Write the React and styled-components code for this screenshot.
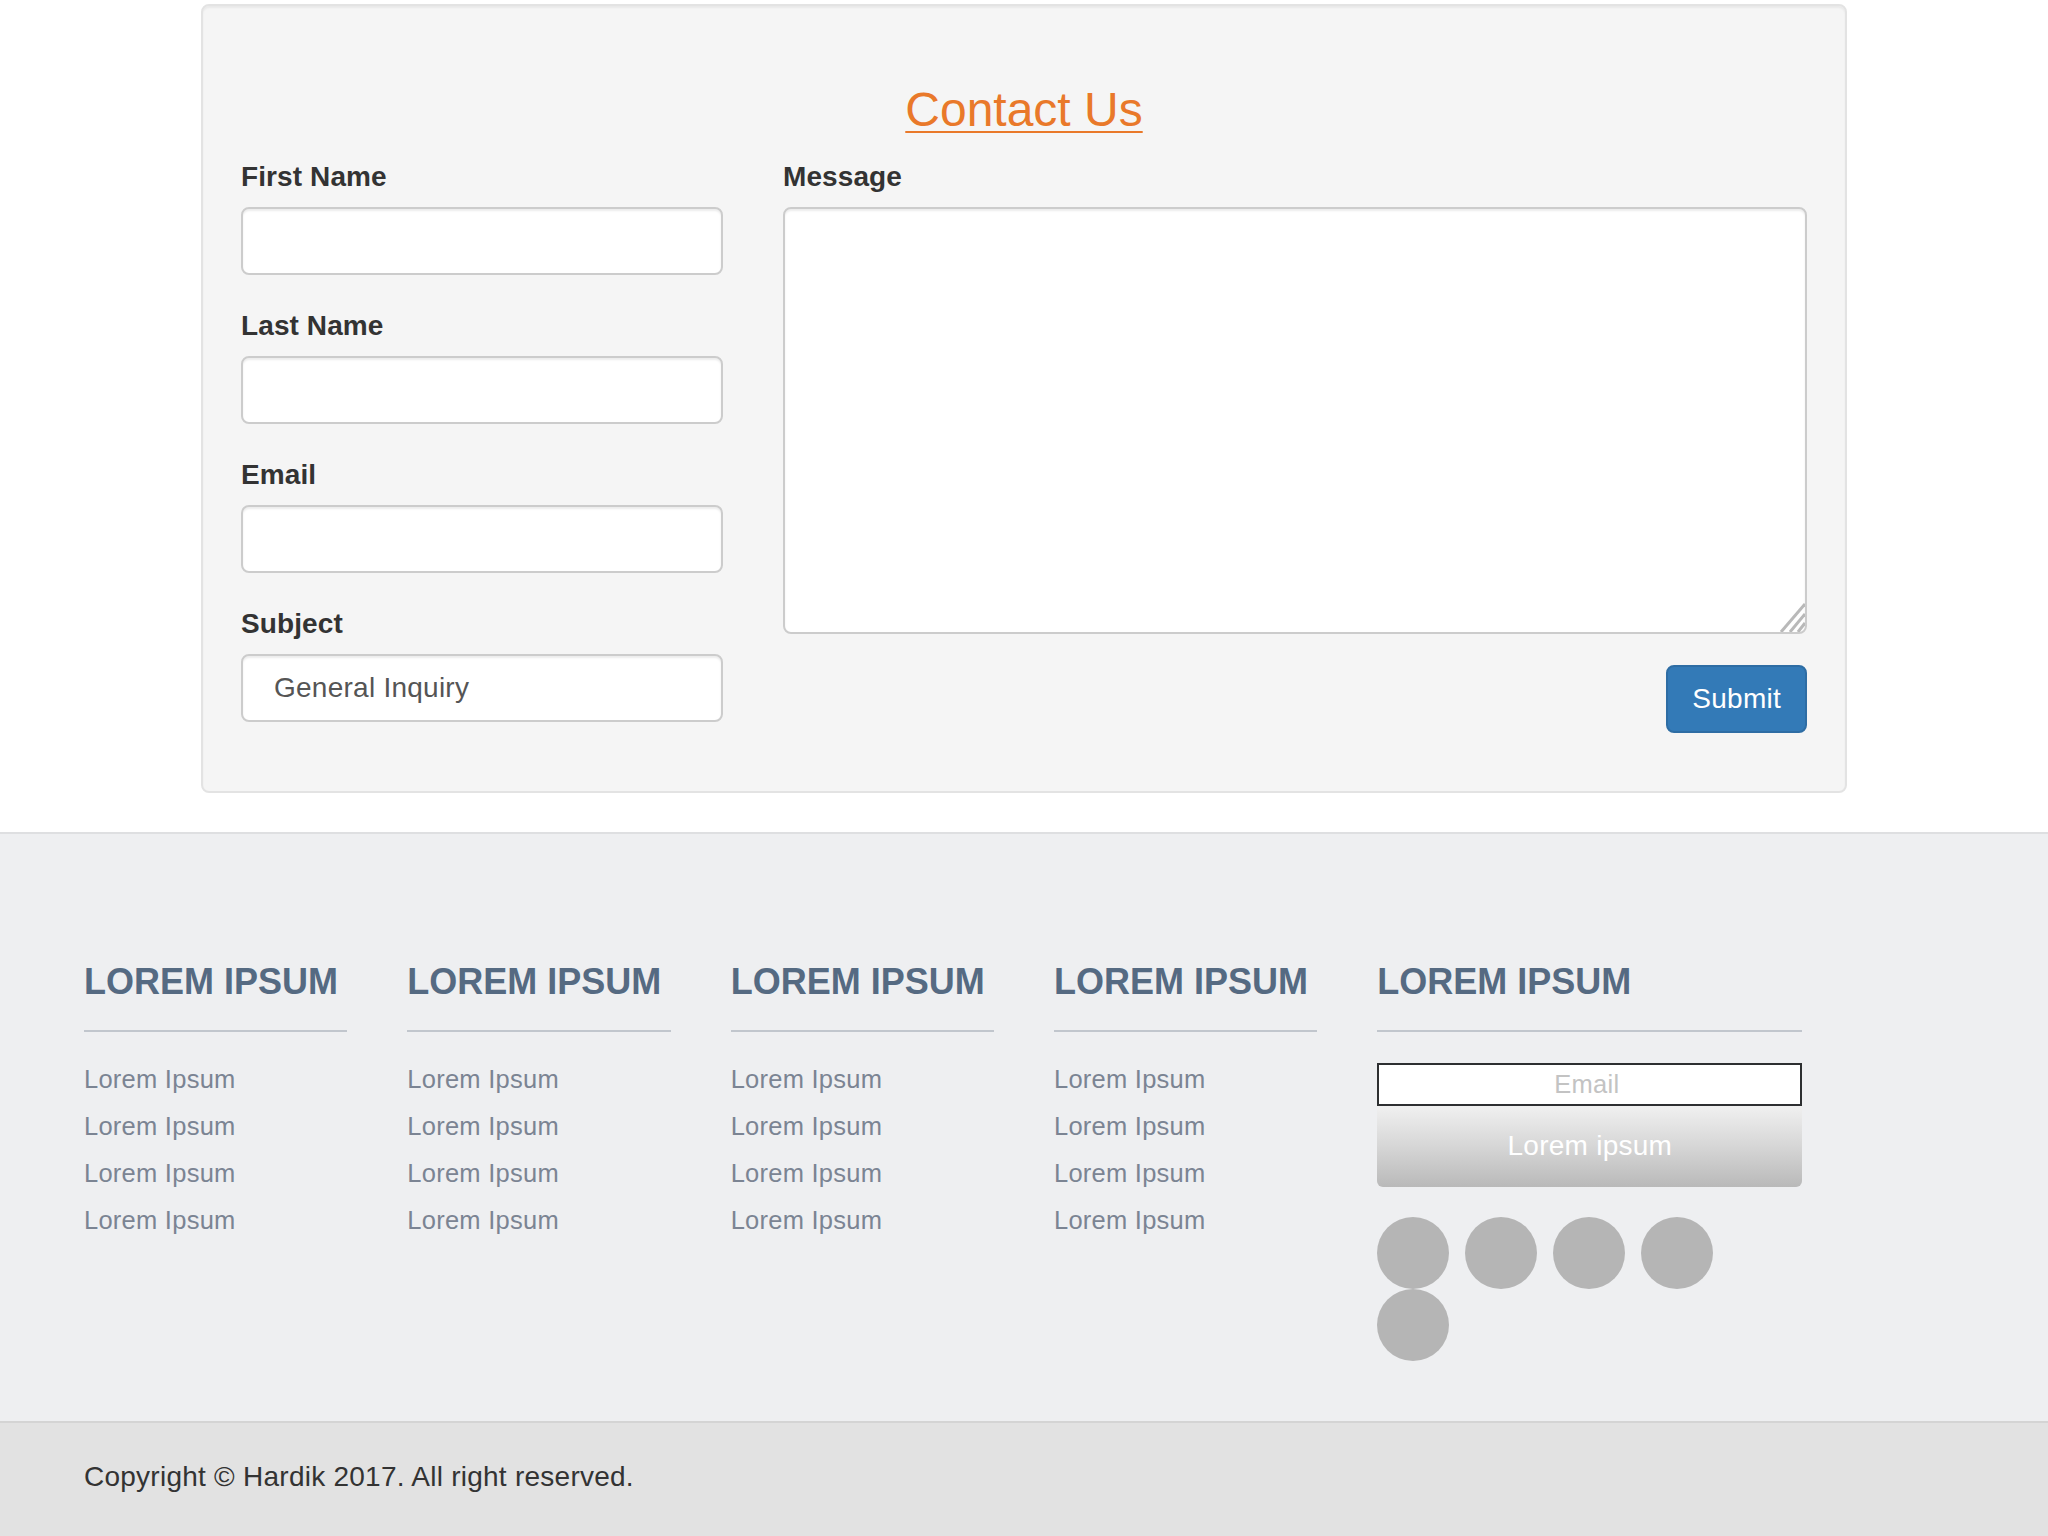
import React from "react";
import styled, { createGlobalStyle } from "styled-components";

const Global = createGlobalStyle`
  *, *::before, *::after { box-sizing: border-box; }
  html, body { margin: 0; padding: 0; background: #ffffff; }
  body {
    font-family: "Liberation Sans", Helvetica, Arial, sans-serif;
    color: #333333;
    font-size: 28px;
    line-height: 1.42857;
  }
`;

const Page = styled.div`
  display: flex;
  flex-direction: column;
  padding-top: 4px;
`;

const Well = styled.section`
  width: 1646px;
  margin: 0 auto 39px;
  background: #f5f5f5;
  border: 2px solid #e3e3e3;
  border-radius: 8px;
  box-shadow: inset 0 2px 2px rgba(0, 0, 0, 0.05);
  padding: 38px;
`;

const Title = styled.h2`
  margin: 40px 0 20px;
  text-align: center;
  font-size: 48px;
  font-weight: 400;
  line-height: 52.8px;
  color: #e9792a;
  text-decoration: underline;
  text-decoration-thickness: 2px;
  text-underline-offset: 5px;
`;

const FormGrid = styled.form`
  display: grid;
  grid-template-columns: 482px 1fr;
  column-gap: 60px;
  align-items: start;
`;

const Column = styled.div`
  display: flex;
  flex-direction: column;
`;

const Group = styled.div`
  display: flex;
  flex-direction: column;
  margin-bottom: 31px;
`;

const Label = styled.label`
  font-size: 28px;
  line-height: 40px;
  font-weight: 700;
  color: #333333;
  margin-bottom: 10px;
  letter-spacing: 0.1px;
`;

const fieldBase = `
  width: 100%;
  background: #ffffff;
  border: 2px solid #cccccc;
  border-radius: 8px;
  box-shadow: inset 0 2px 2px rgba(0, 0, 0, 0.075);
  font-family: "Liberation Sans", Helvetica, Arial, sans-serif;
  font-size: 28px;
  letter-spacing: 0.25px;
  color: #555555;
  outline: none;
`;

const Input = styled.input`
  ${fieldBase}
  height: 68px;
  padding: 12px 24px;
`;

const Select = styled.select`
  ${fieldBase}
  height: 68px;
  padding: 0 24px 0 31px;
  appearance: none;
  -webkit-appearance: none;
`;

const AreaWrap = styled.div`
  position: relative;
  display: flex;
`;

const TextArea = styled.textarea`
  ${fieldBase}
  height: 427px;
  padding: 12px 24px;
  resize: none;
  display: block;
`;

const Grip = styled.svg`
  position: absolute;
  right: 2px;
  bottom: 2px;
  width: 30px;
  height: 30px;
  pointer-events: none;
`;

const Actions = styled.div`
  display: flex;
  justify-content: flex-end;
`;

const SubmitButton = styled.button`
  height: 68px;
  padding: 0 24px;
  background: #337ab7;
  border: 2px solid #2e6da4;
  border-radius: 8px;
  color: #ffffff;
  font-family: "Liberation Sans", Helvetica, Arial, sans-serif;
  font-size: 28px;
  letter-spacing: 0.25px;
  line-height: 40px;
  cursor: pointer;
`;

const Footer = styled.footer`
  background: #eeeff1;
  border-top: 2px solid #dedfe1;
  padding: 128px 0 60px;
`;

const Container = styled.div`
  width: 1940px;
  margin: 0 auto;
  padding: 0 30px;
`;

const FooterGrid = styled.div`
  display: grid;
  grid-template-columns: repeat(4, 263.33px) 425px;
  column-gap: 60px;
  align-items: start;
`;

const FooterCol = styled.div`
  display: flex;
  flex-direction: column;
`;

const FooterHeading = styled.h3`
  margin: 0;
  font-size: 36px;
  line-height: 40px;
  font-weight: 700;
  color: #556a82;
  padding-bottom: 28px;
  border-bottom: 2px solid #c1c6cd;
  white-space: nowrap;
`;

const LinkList = styled.ul`
  list-style: none;
  margin: 24px 0 0;
  padding: 0;
`;

const LinkItem = styled.li`
  font-size: 25.5px;
  line-height: 47px;
  letter-spacing: 0.25px;
  color: #7b8493;
`;

const SubscribeInput = styled.input`
  margin-top: 31px;
  width: 100%;
  height: 43px;
  border: 2px solid #2d2f31;
  background: #ffffff;
  text-align: center;
  font-family: "Liberation Sans", Helvetica, Arial, sans-serif;
  font-size: 25.5px;
  letter-spacing: 0.25px;
  color: #555;
  outline: none;
  padding: 0 6px 0 0;
  &::placeholder { color: #c3c3c3; }
`;

const SubscribeButton = styled.button`
  width: 100%;
  height: 81px;
  border: none;
  border-radius: 0 0 6px 6px;
  background: linear-gradient(to bottom, #f0f0f0 0%, #d6d6d6 50%, #b9b9b9 100%);
  color: #ffffff;
  font-family: "Liberation Sans", Helvetica, Arial, sans-serif;
  font-size: 28px;
  letter-spacing: 0.25px;
  cursor: pointer;
`;

const Socials = styled.div`
  margin-top: 30px;
  width: 380px;
  display: flex;
  flex-wrap: wrap;
  column-gap: 16px;
`;

const Circle = styled.span`
  width: 72px;
  height: 72px;
  border-radius: 50%;
  background: #b5b5b5;
  display: block;
`;

const CopyBar = styled.div`
  background: #e2e2e2;
  border-top: 2px solid #d4d4d4;
  padding: 34px 0 40px;
`;

const CopyText = styled.p`
  margin: 0;
  font-size: 28px;
  line-height: 40px;
  letter-spacing: 0.25px;
  color: #333333;
`;

const fields = [
  { id: "first", label: "First Name" },
  { id: "last", label: "Last Name" },
  { id: "email", label: "Email" },
];

export default function App() {
  return (
    <>
      <Global />
      <Page>
        <Well>
          <Title>Contact Us</Title>
          <FormGrid onSubmit={(e) => e.preventDefault()}>
            <Column>
              {fields.map((f) => (
                <Group key={f.id}>
                  <Label htmlFor={f.id}>{f.label}</Label>
                  <Input id={f.id} type={f.id === "email" ? "email" : "text"} />
                </Group>
              ))}
              <Group>
                <Label htmlFor="subject">Subject</Label>
                <Select id="subject" defaultValue="general">
                  <option value="general">General Inquiry</option>
                  <option value="support">Support</option>
                </Select>
              </Group>
            </Column>
            <Column>
              <Group>
                <Label htmlFor="message">Message</Label>
                <AreaWrap>
                  <TextArea id="message" />
                  <Grip viewBox="0 0 30 30">
                    <g stroke="#b9b9b9" strokeWidth="3" strokeLinecap="butt">
                      <line x1="6" y1="30" x2="30" y2="2" />
                      <line x1="15" y1="30" x2="30" y2="12" />
                      <line x1="23" y1="30" x2="30" y2="21" />
                    </g>
                  </Grip>
                </AreaWrap>
              </Group>
              <Actions>
                <SubmitButton type="submit">Submit</SubmitButton>
              </Actions>
            </Column>
          </FormGrid>
        </Well>

        <Footer>
          <Container>
            <FooterGrid>
              {[0, 1, 2, 3].map((c) => (
                <FooterCol key={c}>
                  <FooterHeading>LOREM IPSUM</FooterHeading>
                  <LinkList>
                    {[0, 1, 2, 3].map((i) => (
                      <LinkItem key={i}>Lorem Ipsum</LinkItem>
                    ))}
                  </LinkList>
                </FooterCol>
              ))}
              <FooterCol>
                <FooterHeading>LOREM IPSUM</FooterHeading>
                <SubscribeInput type="email" placeholder="Email" />
                <SubscribeButton type="button">Lorem ipsum</SubscribeButton>
                <Socials>
                  {[0, 1, 2, 3, 4].map((i) => (
                    <Circle key={i} />
                  ))}
                </Socials>
              </FooterCol>
            </FooterGrid>
          </Container>
        </Footer>

        <CopyBar>
          <Container>
            <CopyText>Copyright © Hardik 2017. All right reserved.</CopyText>
          </Container>
        </CopyBar>
      </Page>
    </>
  );
}
